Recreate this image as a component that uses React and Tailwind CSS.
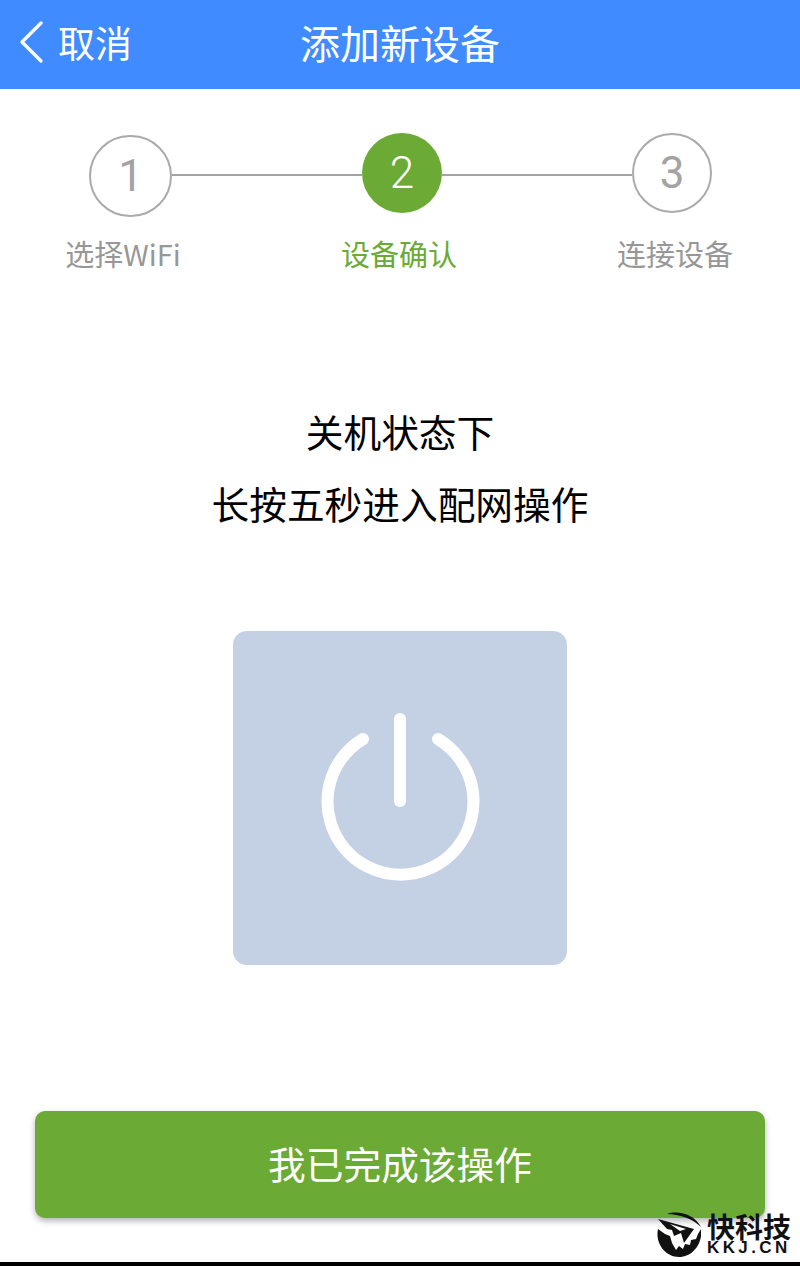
import React from 'react';

const CJK = "font-['Noto_Sans_CJK_SC','Noto_Sans',sans-serif]";

const PowerIcon = () => (
  <svg width="160" height="170" viewBox="0 0 160 170" fill="none" stroke="#fff" strokeLinecap="round" strokeWidth="12">
    <path d="M80 6V88" />
    <path d="M43 26A73 73 0 1 0 118 26" />
  </svg>
);

const Logo = () => (
  <svg width="44" height="45" viewBox="0 0 44 45" fill="#111">
    <path d="M10 2C21 -2 37 2 44 15C36 7 22 2 10 2Z" />
    <path d="M1 17C-2 31 8 45 22 45C36 45 46 31 44 17L41 22L39 27L34 28L33 33L28 32L26 37L22 34L19 38L15 31L13 24L8 22Z" />
    <path d="M1 7L37 17L27 31L24 21L17 24L15 18L10 17Z" />
    <path d="M13 12L29 17L23 19Z" fill="#fff" />
  </svg>
);

const Step = ({ n, active, big }) => (
  <div
    className={`flex items-center justify-center rounded-full shrink-0 font-['Roboto',sans-serif] text-[44px] leading-none ${
      big ? 'w-[83px] h-[82px] self-end' : 'w-20 h-20 self-start'
    } ${active ? 'bg-[#6aaa35] text-white font-light' : 'border-2 border-[#aaaaaa] text-[#a3a3a3] bg-white font-normal'}`}
  >
    {n}
  </div>
);

export default function App() {
  return (
    <div className={`relative w-[800px] h-[1266px] bg-white overflow-hidden flex flex-col ${CJK}`}>
      <header className="h-[89px] bg-[#3f8bff] text-white flex items-center relative shrink-0 pb-[5px]">
        <div className="flex items-center pl-[19px]">
          <svg width="24" height="42" viewBox="0 0 24 42" fill="none" stroke="#fff" strokeWidth="3.2" strokeLinecap="round" strokeLinejoin="round">
            <path d="M22 2 L3 21 L22 40" />
          </svg>
          <span className="ml-[15px] text-[37px] leading-none font-normal">取消</span>
        </div>
        <h1 className="absolute left-0 right-0 text-center text-[40px] leading-none font-normal">添加新设备</h1>
      </header>

      <div className="flex items-center pl-[89px] mt-[44px] h-[84px]">
        <Step n="1" big />
        <div className="w-[190px] h-[2px] bg-[#a3a3a3]" />
        <Step n="2" active />
        <div className="w-[190px] h-[2px] bg-[#a3a3a3]" />
        <Step n="3" />
      </div>

      <div className="flex mt-[15px] text-[29px] leading-[42px] text-[#979797]">
        <span className="w-[124px] ml-[61px] text-center whitespace-nowrap">选择WiFi</span>
        <span className="w-[200px] ml-[114px] -mr-[40px] text-center text-[#6aaa35] whitespace-nowrap">设备确认</span>
        <span className="w-[200px] ml-[116px] text-center whitespace-nowrap">连接设备</span>
      </div>

      <div className="mt-[121px] text-center text-black text-[37.7px] leading-[72px]">
        <p>关机状态下</p>
        <p>长按五秒进入配网操作</p>
      </div>

      <div className="mt-[92px] mx-auto w-[334px] h-[334px] rounded-[14px] bg-[#c4d1e4] flex items-center justify-center">
        <PowerIcon />
      </div>

      <button className="mt-[146px] mx-[35px] h-[107px] pb-[3px] rounded-[10px] bg-[#6aaa35] text-white text-[37.7px] shadow-[0_3px_6px_rgba(0,0,0,0.3)]">
        我已完成该操作
      </button>

      <div className="absolute left-0 right-0 bottom-0 h-1 bg-black" />

      <div className="absolute left-[657px] top-[1212px] flex items-start">
        <Logo />
        <div className="ml-[6px] flex flex-col items-start text-[#111]">
          <span className="text-[28px] leading-[29px] font-bold">快科技</span>
          <span className="text-[17px] leading-[14px] font-bold font-['Liberation_Sans',sans-serif] tracking-[3.4px]">KKJ.CN</span>
        </div>
      </div>
    </div>
  );
}
